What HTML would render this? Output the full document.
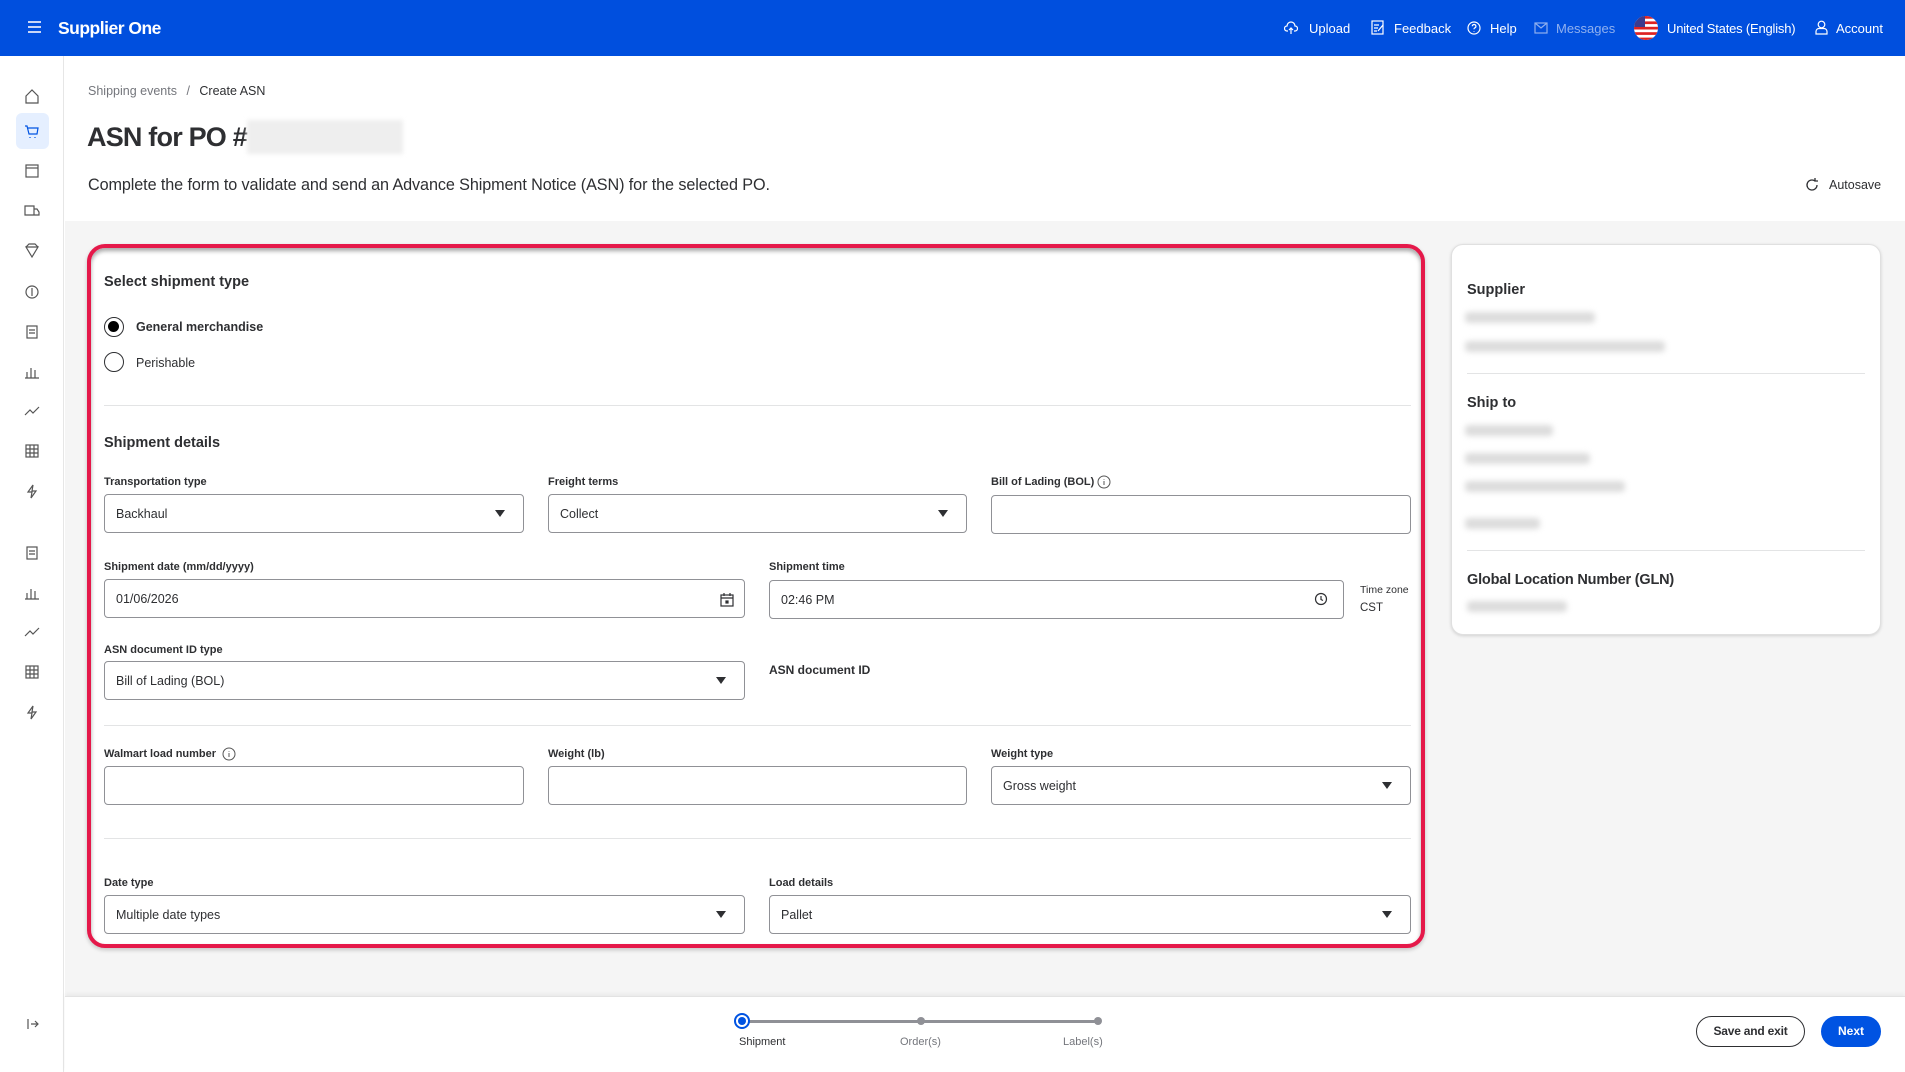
<!DOCTYPE html>
<html><head><meta charset="utf-8"><style>
*{box-sizing:border-box;margin:0;padding:0}
body{width:1905px;height:1072px;position:relative;overflow:hidden;background:#fff;font-family:"Liberation Sans",sans-serif;color:#2e2f32}
.a{position:absolute}
.hdr{left:0;top:0;width:1905px;height:56px;background:#004fde;color:#fff}
.hi{font-size:13px;top:21px;color:#fff}
.side{left:0;top:56px;width:64px;height:1016px;border-right:1px solid #e6e6e6;background:#fff}
.main{left:65px;top:221px;width:1840px;height:775px;background:#f5f5f5}
.card{background:#fff;border-radius:12px}
.lbl{font-size:11px;font-weight:bold;color:#2e2f32}
.inp{border:1px solid #909196;border-radius:4px;background:#fff;height:39px;font-size:12.5px;padding:12px 11px;color:#2e2f32}
.car{position:absolute;right:18px;top:15px;width:0;height:0;border-left:5px solid transparent;border-right:5px solid transparent;border-top:7px solid #2e2f32}
.hr{height:1px;background:#e3e4e5}
.blur{background:#dcdcdc;border-radius:4px;filter:blur(3px);height:11px}
.h3{font-size:14.5px;font-weight:bold}
</style></head><body>
<div class="a hdr">
 <div class="a" style="left:28px;top:21px;width:13px;height:2px;background:#c9d6f7;box-shadow:0 5px 0 #c9d6f7,0 10px 0 #c9d6f7"></div>
 <div class="a" style="left:58px;top:18px;font-size:17.5px;font-weight:bold;letter-spacing:-0.5px">Supplier One</div>
 <svg class="a" style="left:1284px;top:21px" width="14" height="14" viewBox="0 0 14 14" fill="none" stroke="#fff" stroke-width="1.2"><path d="M4 10H3a2.5 2.5 0 0 1 0-5 4 4 0 0 1 8 0 2.5 2.5 0 0 1 0 5h-1M7 13V7M5 9l2-2 2 2"/></svg>
 <div class="a hi" style="left:1309px">Upload</div>
 <svg class="a" style="left:1371px;top:20px" width="14" height="15" viewBox="0 0 14 15" fill="none" stroke="#fff" stroke-width="1.2"><rect x="1" y="1" width="11" height="13"/><path d="M3 5h5M3 8h4M3 11h3M7 11l5-6"/></svg>
 <div class="a hi" style="left:1394px">Feedback</div>
 <svg class="a" style="left:1467px;top:21px" width="14" height="14" viewBox="0 0 14 14" fill="none" stroke="#fff" stroke-width="1.2"><circle cx="7" cy="7" r="6"/><path d="M5.3 5.3a1.8 1.8 0 1 1 2.3 1.7c-.5.2-.6.5-.6 1.2M7 10v.6"/></svg>
 <div class="a hi" style="left:1490px">Help</div>
 <svg class="a" style="left:1534px;top:22px" width="14" height="12" viewBox="0 0 14 12" fill="none" stroke="#8fb0ef" stroke-width="1.2"><rect x="1" y="1" width="12" height="10"/><path d="M1 1l6 5 6-5"/></svg>
 <div class="a hi" style="left:1556px;color:#8fb0ef">Messages</div>
 <svg class="a" style="left:1634px;top:16px" width="24" height="24" viewBox="0 0 24 24"><defs><clipPath id="c"><circle cx="12" cy="12" r="12"/></clipPath></defs><g clip-path="url(#c)"><rect width="24" height="24" fill="#fff"/><g fill="#d22"><rect y="0" width="24" height="2.7"/><rect y="5.4" width="24" height="2.7"/><rect y="10.8" width="24" height="2.7"/><rect y="16.2" width="24" height="2.7"/><rect y="21.6" width="24" height="2.7"/></g><rect width="11" height="11" fill="#3c3b8e"/></g></svg>
 <div class="a hi" style="left:1667px;letter-spacing:-0.2px">United States (English)</div>
 <svg class="a" style="left:1815px;top:20px" width="13" height="15" viewBox="0 0 13 15" fill="none" stroke="#fff" stroke-width="1.2"><circle cx="6.5" cy="4.5" r="3.3"/><path d="M1 14v-2.5A3 3 0 0 1 4 8.5h5a3 3 0 0 1 3 3V14z"/></svg>
 <div class="a hi" style="left:1836px">Account</div>
</div>

<div class="a side">
 <div class="a" style="left:16px;top:57px;width:33px;height:36px;background:#e5efff;border-radius:6px"></div>
</div>
<svg class="a" style="left:0;top:0" width="64" height="1072" fill="none" stroke="#555" stroke-width="1.2">
 <path d="M26 96l6-6 6 6v7h-12z"/>
 <path d="M25 126h2l2 8h8l1-6h-10M30 137v1M35 137v1" stroke="#0053e2"/>
 <rect x="26" y="165" width="12" height="12"/><path d="M26 168h12"/>
 <path d="M25 206h9v9h-9zM34 209h3l2 3v3h-5"/>
 <path d="M26 247h12l-6 10zM26 247l3-3h6l3 3"/>
 <circle cx="32" cy="292" r="6"/><path d="M32 288v8"/>
 <rect x="27" y="326" width="10" height="12"/><path d="M29 330h6M29 333h6"/>
 <path d="M27 378v-6M31 378v-10M35 378v-8M25 378h14"/>
 <path d="M25 415l5-5 3 3 6-6"/>
 <rect x="26" y="445" width="12" height="12"/><path d="M26 449h12M26 453h12M30 445v12M34 445v12"/>
 <path d="M33 485l-5 7h4l-1 6 5-7h-4z"/>
 <rect x="27" y="547" width="10" height="12"/><path d="M29 551h6M29 554h6"/>
 <path d="M27 599v-6M31 599v-10M35 599v-8M25 599h14"/>
 <path d="M25 636l5-5 3 3 6-6"/>
 <rect x="26" y="666" width="12" height="12"/><path d="M26 670h12M26 674h12M30 666v12M34 666v12"/>
 <path d="M33 706l-5 7h4l-1 6 5-7h-4z"/>
 <path d="M28 1019v10M31 1024h7M35 1021l3 3-3 3"/>
</svg>

<div class="a" style="left:88px;top:84px;font-size:12.5px;color:#74767c">Shipping events <span style="margin:0 6px">/</span> <span style="color:#2e2f32">Create ASN</span></div>
<div class="a" style="left:87px;top:122px;font-size:27px;font-weight:bold;letter-spacing:-0.8px">ASN for PO #</div>
<div class="a" style="left:247px;top:120px;width:156px;height:34px;background:#eee;filter:blur(2px)"></div>
<div class="a" style="left:88px;top:176px;font-size:16.2px;letter-spacing:-0.1px">Complete the form to validate and send an Advance Shipment Notice (ASN) for the selected PO.</div>
<svg class="a" style="left:1804px;top:177px" width="16" height="16" viewBox="0 0 16 16" fill="none" stroke="#2e2f32" stroke-width="1.3"><path d="M13 8a5 5 0 1 1-2-4M11 1v3h3"/></svg>
<div class="a" style="left:1829px;top:178px;font-size:12.5px">Autosave</div>

<div class="a main"></div>

<div class="a card" style="left:87px;top:244px;width:1338px;height:704px;border:4px solid #e5194a;border-radius:18px;box-shadow:inset 0 3px 4px rgba(0,0,0,.35),0 2px 4px rgba(0,0,0,.2)"></div>
<div class="a h3" style="left:104px;top:274px">Select shipment type</div>
<div class="a" style="left:104px;top:317px;width:20px;height:20px;border:1.5px solid #2e2f32;border-radius:50%"><div style="margin:3px;width:11px;height:11px;border-radius:50%;background:#000"></div></div>
<div class="a" style="left:136px;top:320px;font-size:12.5px;font-weight:bold">General merchandise</div>
<div class="a" style="left:104px;top:352px;width:20px;height:20px;border:1.5px solid #2e2f32;border-radius:50%"></div>
<div class="a" style="left:136px;top:356px;font-size:12.5px">Perishable</div>
<div class="a hr" style="left:104px;top:405px;width:1307px"></div>
<div class="a h3" style="left:104px;top:435px">Shipment details</div>

<div class="a lbl" style="left:104px;top:476px">Transportation type</div>
<div class="a inp" style="left:104px;top:494px;width:420px">Backhaul<div class="car"></div></div>
<div class="a lbl" style="left:548px;top:476px">Freight terms</div>
<div class="a inp" style="left:548px;top:494px;width:419px">Collect<div class="car"></div></div>
<div class="a lbl" style="left:991px;top:476px">Bill of Lading (BOL)</div>
<svg class="a" style="left:1097px;top:475px" width="14" height="14" viewBox="0 0 14 14" fill="none" stroke="#555" stroke-width="1"><circle cx="7" cy="7" r="6"/><path d="M7 6v4M7 4v.6"/></svg>
<div class="a inp" style="left:991px;top:495px;width:420px"></div>

<div class="a lbl" style="left:104px;top:561px">Shipment date (mm/dd/yyyy)</div>
<div class="a inp" style="left:104px;top:579px;width:641px">01/06/2026</div>
<svg class="a" style="left:720px;top:592px" width="14" height="15" viewBox="0 0 14 15" fill="none" stroke="#2e2f32" stroke-width="1.2"><rect x="1" y="3" width="12" height="11"/><path d="M1 6h12M4 1v3M10 1v3"/><rect x="6" y="9" width="2" height="2" fill="#2e2f32"/></svg>
<div class="a lbl" style="left:769px;top:561px">Shipment time</div>
<div class="a inp" style="left:769px;top:580px;width:575px">02:46 PM</div>
<svg class="a" style="left:1314px;top:592px" width="14" height="14" viewBox="0 0 14 14" fill="none" stroke="#2e2f32" stroke-width="1.2"><circle cx="7" cy="7" r="5.5"/><path d="M7 4v3.5l2 1"/></svg>
<div class="a" style="left:1360px;top:584px;font-size:10.5px">Time zone</div>
<div class="a" style="left:1360px;top:602px;font-size:11.5px">CST</div>

<div class="a lbl" style="left:104px;top:644px">ASN document ID type</div>
<div class="a inp" style="left:104px;top:661px;width:641px">Bill of Lading (BOL)<div class="car"></div></div>
<div class="a lbl" style="left:769px;top:663px;font-size:12px">ASN document ID</div>
<div class="a hr" style="left:104px;top:725px;width:1307px"></div>

<div class="a lbl" style="left:104px;top:748px">Walmart load number</div>
<svg class="a" style="left:222px;top:747px" width="14" height="14" viewBox="0 0 14 14" fill="none" stroke="#555" stroke-width="1"><circle cx="7" cy="7" r="6"/><path d="M7 6v4M7 4v.6"/></svg>
<div class="a inp" style="left:104px;top:766px;width:420px"></div>
<div class="a lbl" style="left:548px;top:748px">Weight (lb)</div>
<div class="a inp" style="left:548px;top:766px;width:419px"></div>
<div class="a lbl" style="left:991px;top:748px">Weight type</div>
<div class="a inp" style="left:991px;top:766px;width:420px">Gross weight<div class="car"></div></div>
<div class="a hr" style="left:104px;top:838px;width:1307px"></div>

<div class="a lbl" style="left:104px;top:877px">Date type</div>
<div class="a inp" style="left:104px;top:895px;width:641px">Multiple date types<div class="car"></div></div>
<div class="a lbl" style="left:769px;top:877px">Load details</div>
<div class="a inp" style="left:769px;top:895px;width:642px">Pallet<div class="car"></div></div>

<div class="a card" style="left:1451px;top:244px;width:430px;height:391px;border:1px solid #e0e0e0;box-shadow:0 1px 3px rgba(0,0,0,.15)"></div>
<div class="a h3" style="left:1467px;top:282px">Supplier</div>
<div class="a blur" style="left:1465px;top:312px;width:130px"></div>
<div class="a blur" style="left:1465px;top:341px;width:200px"></div>
<div class="a hr" style="left:1467px;top:373px;width:398px"></div>
<div class="a h3" style="left:1467px;top:395px">Ship to</div>
<div class="a blur" style="left:1465px;top:425px;width:88px"></div>
<div class="a blur" style="left:1465px;top:453px;width:125px"></div>
<div class="a blur" style="left:1465px;top:481px;width:160px"></div>
<div class="a blur" style="left:1465px;top:518px;width:75px"></div>
<div class="a hr" style="left:1467px;top:550px;width:398px"></div>
<div class="a h3" style="left:1467px;top:572px;letter-spacing:-0.2px">Global Location Number (GLN)</div>
<div class="a blur" style="left:1467px;top:601px;width:100px"></div>

<div class="a" style="left:65px;top:996px;width:1840px;height:76px;background:#fff;border-top:1px solid #e3e3e3;box-shadow:0 -2px 4px rgba(0,0,0,.05)"></div>
<div class="a" style="left:742px;top:1020px;width:356px;height:3px;background:#8f9096"></div>
<div class="a" style="left:734px;top:1013px;width:16px;height:16px;border-radius:50%;border:2px solid #0053e2;background:#fff"><div style="margin:2px;width:8px;height:8px;border-radius:50%;background:#0053e2"></div></div>
<div class="a" style="left:917px;top:1017px;width:8px;height:8px;border-radius:50%;background:#8f9096"></div>
<div class="a" style="left:1094px;top:1017px;width:8px;height:8px;border-radius:50%;background:#8f9096"></div>
<div class="a" style="left:739px;top:1036px;font-size:11px">Shipment</div>
<div class="a" style="left:900px;top:1036px;font-size:11px;color:#74767c">Order(s)</div>
<div class="a" style="left:1063px;top:1036px;font-size:11px;color:#74767c">Label(s)</div>
<div class="a" style="left:1696px;top:1016px;width:109px;height:31px;border:1px solid #2e2f32;border-radius:16px;font-size:12px;font-weight:bold;text-align:center;line-height:29px;letter-spacing:-0.2px">Save and exit</div>
<div class="a" style="left:1821px;top:1016px;width:60px;height:31px;background:#0053e2;border-radius:16px;color:#fff;font-size:12px;font-weight:bold;text-align:center;line-height:31px">Next</div>
</body></html>
